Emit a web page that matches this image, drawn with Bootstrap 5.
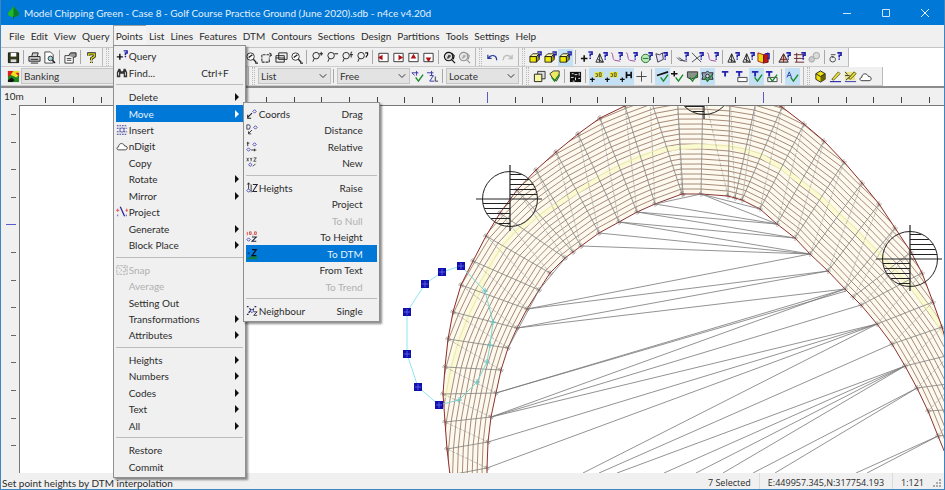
<!DOCTYPE html>
<html lang="en">
<head>
<meta charset="utf-8">
<meta name="viewport" content="width=device-width, initial-scale=1">
<title>Model Chipping Green - n4ce</title>
<link href="https://cdn.jsdelivr.net/npm/bootstrap@5.3.0/dist/css/bootstrap.min.css" rel="stylesheet">
<style>
  :root { --face: #f0f0f0; --edge: #a0a0a0; --accent: #0078d7; }
  body { font: 10px/14px Lato, "Open Sans", sans-serif; color: #2c2c2c; background: var(--face); }
  .app { border: solid #3f86c0; border-width: 0 1px 1px; }
  .title-strip { background: var(--accent); color: #e4f1fc; height: 25px; padding-left: 7px; }
  .title-strip h1 { font-size: 10px; line-height: 14px; font-weight: 400; }
  .title-strip .leaf { margin-right: 5px; }
  .win-btn { width: 39px; height: 25px; border: 0; border-radius: 0; padding: 0; color: #fff; line-height: 0; }
  .menu-strip { height: 22px; padding: 0 5px; align-items: flex-start; }
  .menu-strip .nav-link { color: #2c2c2c; padding: 0 3px; line-height: 22px; height: 20px; }
  .menu-strip .nav-link.show { background: #f4f4f4; box-shadow: inset 1px 1px var(--edge); }
  .pop.dropdown-menu { display: flex; flex-direction: column; border: 1px solid #8f8f8f; border-radius: 0; background: var(--face); padding: 2px; margin: 0; font-size: 10px; box-shadow: 2px 2px 2px #00000070; min-width: 0; color: #2c2c2c; }
  .pop > li { flex: 1 1 0; display: flex; position: relative; }
  .pop > li.rule { flex: 0 0 8px; align-items: center; }
  .pop > li.rule hr { flex: 1; margin: 0; border-color: #999; opacity: .6; }
  .pop .dropdown-item { display: flex; align-items: center; padding: 0; color: inherit; font-size: 10px; line-height: 14px; }
  .pop .dropdown-item.disabled { color: #b0b0b0; }
  .pop .dropdown-item.active { background: var(--accent); color: #e8f3fc; }
  .slot { flex: 0 0 12px; width: 12px; height: 12px; margin-right: 1px; }
  .tail { flex: 0 0 14px; }
  .tail.more::after { content: ""; display: block; margin-left: 6px; width: 0; border: solid transparent; border-width: 4px 0 4px 4px; border-left-color: #111; }
  .active .tail.more::after { border-left-color: #fff; }
  .pop.menu-points { top: 100%; left: 0; width: 133px; height: 433px; }
  .pop.menu-move { top: -3px; left: 100%; width: 137px; height: 220px; }
  .bar-area { background: #fff; border-top: 1px solid #c4c4c4; }
  .bar-row { background: var(--face); width: max-content; height: 19px; padding: 0 5px; border-right: 1px solid #bbb; border-bottom: 1px solid #ccc; }
  .bar-row .btn { width: 15px; height: 17px; padding: 0; border: 0; border-radius: 0; line-height: 0; flex: none; }
  .bar-row .btn.active { background: #c4e0f4; }
  .bar-row .btn:disabled { opacity: .4; }
  .bar-row .btn svg { width: 13px; height: 13px; }
  .split { flex: 0 0 1px; height: 14px; margin: 0 3px 0 2px; background: #a8a8a8; }
  .grip { flex: 0 0 13px; height: 18px; display: flex; justify-content: center; gap: 3px; }
  .grip::before { content: ""; width: 1px; background: #bbb; }
  .grip::after { content: ""; width: 3px; border: dotted #bbb; border-width: 0 1px; }
  .bar-row .form-select { font-size: 10px; line-height: 14px; height: 16px; min-height: 0; width: 73px; padding: 0 14px 0 2px; border: 1px solid #c4c4c4; border-radius: 0; background-color: #e3e3e3; background-size: 8px 8px; background-position: right 3px center; color: #333; flex: none; }
  .bar-row .layer-select { width: 224px; }
  .workspace { display: grid; grid-template-columns: 18px minmax(0, 1fr); grid-template-rows: 17px minmax(0, 1fr); border-top: 2px solid #8c8c8c; min-height: 0; }
  .workspace svg { display: block; width: 100%; height: 100%; }
  .map-pane { background: #fff; border: solid #777; border-width: 1px 0 0 1px; min-height: 0; overflow: hidden; }
  .unit { grid-column: 1 / -1; grid-row: 1; padding-left: 3px; line-height: 16px; }
  .ruler-top { grid-column: 2; grid-row: 1; overflow: hidden; }
  .ruler-left { overflow: hidden; }
  .status { height: 16px; padding: 0 2px 0 1px; line-height: 20px; }
  .status output { border-left: 1px solid #dadada; padding: 0 8px; font-family: "Open Sans", sans-serif; font-size: 9px; }
</style>
</head>
<body>
<svg width="0" height="0" class="position-absolute" aria-hidden="true">
  <defs>
    <g id="mag" fill="none" stroke="#222"><circle cx="5.500" cy="5" r="3.500"/><path d="M3.500 8 2 11.500"/></g>
    <path id="qm" d="M8 2h4v2.500h-2V7M10 8v1.500" fill="none" stroke="#2020a8" stroke-width="1.700"/>
    <path id="tk" d="M5 8l3 4 5-7" fill="none" stroke="#158a28" stroke-width="1.500"/>
    <g id="cube" stroke="#111" stroke-width=".9"><path d="M1 6l3-3h7l-3 3z" fill="#fffbb0"/><path d="M1 6h7v6H1z" fill="#f1e90c"/><path d="M8 6l3-3v6l-3 3z" fill="#a8a000"/></g>
    <g id="tee"><path d="M1 2h7M4.500 2v5" fill="none" stroke="#2424b0" stroke-width="2"/></g>
    <symbol id="save" viewBox="0 0 14 14"><path d="M1.500 2h11v10.500h-11z" fill="#333a18" stroke="#111"/><path d="M4 2h6v4H4z" fill="#fff"/><path d="M4 9h6v3H4z" fill="#ddd"/></symbol>
    <symbol id="print" viewBox="0 0 14 14"><path d="M4 6l1-4h6l-1 4M1 6h12v5H1zM3 9h8M3 13h8" fill="#ccc" stroke="#222"/></symbol>
    <symbol id="preview" viewBox="0 0 14 14"><path d="M2 1h6l3 3v9H2z" fill="#fff" stroke="#444"/><circle cx="8" cy="8" r="2.500" fill="#9ed4dc" stroke="#333"/><path d="M10 10l3 3" stroke="#222" stroke-width="1.500"/></symbol>
    <symbol id="props" viewBox="0 0 14 14"><path d="M1 5h9v8H1zM3 8h5M3 10h5" fill="#fff" stroke="#333"/><path d="M5 5l2-3h6v4l-3 1" fill="#999" stroke="#222"/></symbol>
    <symbol id="help" viewBox="0 0 14 14"><path d="M4 5V3h6v3L7 8v2M7 11.500V13" fill="none" stroke="#222" stroke-width="3.200"/><path d="M4 5V3h6v3L7 8v2M7 11.500V13" fill="none" stroke="#e4dc10" stroke-width="1.400"/></symbol>
    <symbol id="zoom-e" viewBox="0 0 14 14"><circle cx="6" cy="6" r="4" fill="#fff" stroke="#333"/><path d="M4 7l4-3M9 9l3 3M11 13h3" stroke="#222" stroke-width="1.500"/></symbol>
    <symbol id="pan" viewBox="0 0 14 14"><path d="M2 4v8h8V7M3 4h9M10 2l3 2-3 2" fill="none" stroke="#333" stroke-width="1.200" stroke-dasharray="3 1"/></symbol>
    <symbol id="wins" viewBox="0 0 14 14"><path d="M4 2h9v7H4zM1 5h9v7H1zM1 7.500h9" fill="#eee" stroke="#222"/></symbol>
    <symbol id="z-plus" viewBox="0 0 14 14"><use href="#mag"/><path d="M9 3h4M11 1v4" stroke="#111"/></symbol>
    <symbol id="z-minus" viewBox="0 0 14 14"><use href="#mag"/><path d="M9 3h4" stroke="#111"/></symbol>
    <symbol id="z-in" viewBox="0 0 14 14"><use href="#mag"/><path d="M12 1c-2 0-1 2-1 6M9.500 4H13" fill="none" stroke="#111"/></symbol>
    <symbol id="z-last" viewBox="0 0 14 14"><use href="#mag"/><path d="M10 2h2.500v2L11 6v1" fill="none" stroke="#111" stroke-width="1.200"/></symbol>
    <symbol id="a-left" viewBox="0 0 14 14"><path d="M2 2.500h10v9H2z" fill="#fff" stroke="#333"/><path d="M1 7l5-3v6z" fill="#b01010"/></symbol>
    <symbol id="a-right" viewBox="0 0 14 14"><path d="M2 2.500h10v9H2z" fill="#fff" stroke="#333"/><path d="M12 7L7 4v6z" fill="#b01010"/></symbol>
    <symbol id="a-up" viewBox="0 0 14 14"><path d="M2 2.500h10v9H2z" fill="#fff" stroke="#333"/><path d="M7 3l3 5H4z" fill="#b01010"/></symbol>
    <symbol id="a-down" viewBox="0 0 14 14"><path d="M2 2.500h10v9H2z" fill="#fff" stroke="#333"/><path d="M7 12l3-5H4z" fill="#b01010"/></symbol>
    <symbol id="refresh" viewBox="0 0 14 14"><circle cx="6" cy="6" r="4.500" fill="#ddd" stroke="#111" stroke-width="1.200"/><path d="M4 8l2-4 3 1-3 3z" fill="#444"/><path d="M9 9l4 4M9 2l3 3-1 4" fill="none" stroke="#111" stroke-width="1.300"/></symbol>
    <symbol id="undo" viewBox="0 0 14 14"><path d="M2 4v4h4M2.500 8c2-4 9-5 9 2" fill="none" stroke="#2a3a9a" stroke-width="1.300"/></symbol>
    <symbol id="redo" viewBox="0 0 14 14"><path d="M12 4v4H8M11.500 8c-2-4-9-5-9 2" fill="none" stroke="#777" stroke-width="1.500"/></symbol>
    <symbol id="cube-q" viewBox="0 0 14 14"><use href="#cube"/><path d="M9 1h4v3h-2v3" fill="none" stroke="#2020a8" stroke-width="1.600"/></symbol>
    <symbol id="plus-q" viewBox="0 0 14 14"><path d="M1 8h7M4.500 4.500v7" stroke="#111" stroke-width="1.700"/><use href="#qm" x="1" y="-1"/></symbol>
    <symbol id="tri-q" viewBox="0 0 14 14"><path d="M1 12l4-9 4 9zM5 3v9M3 9l6 3" fill="none" stroke="#222"/><use href="#qm" x="1"/></symbol>
    <symbol id="link-q" viewBox="0 0 14 14"><path d="M1 2c3 0 1 6 4 8l6 1" fill="none" stroke="#9a4a9a"/><use href="#qm" x="1"/></symbol>
    <symbol id="circ-q" viewBox="0 0 14 14"><circle cx="6" cy="8" r="4.500" fill="#b8ecb0" stroke="#246a3a"/><path d="M3 8h6" stroke="#246a3a"/><use href="#qm" x="1"/></symbol>
    <symbol id="poly-q" viewBox="0 0 14 14"><path d="M1 3l4 1 3-2 1 7-6 3z" fill="#e8e0f4" stroke="#334"/><use href="#qm" x="1"/></symbol>
    <symbol id="line-q" viewBox="0 0 14 14"><path d="M1 7l3 3 8 1M3 7l6 4" fill="none" stroke="#445"/><use href="#qm" x="1"/></symbol>
    <symbol id="cross-q" viewBox="0 0 14 14"><path d="M1 2l10 10M1 12l9-7" fill="none" stroke="#445"/><use href="#qm" x="1"/></symbol>
    <symbol id="book" viewBox="0 0 14 14"><path d="M1 2l6 2v9l-6-2z" fill="#e8d810" stroke="#b02020"/><path d="M7 4l5-2v10l-5 1z" fill="#c01818" stroke="#701010"/><path d="M9 3h4v5h-2" stroke="#2020a8" stroke-width="1.500" fill="none"/></symbol>
    <symbol id="tri-r" viewBox="0 0 14 14"><path d="M1 12l5-9 5 9z" fill="#e2b8b0" stroke="#222"/><path d="M3 9h6M6 3v9" stroke="#722"/><use href="#qm" x="1"/></symbol>
    <symbol id="hash-q" viewBox="0 0 14 14"><path d="M1 4h11M1 8h11M2 12h10M4 2v10" stroke="#622" fill="none"/><use href="#qm" x="1"/></symbol>
    <symbol id="chain" viewBox="0 0 14 14"><circle cx="4" cy="9" r="3" fill="#999" stroke="#333"/><circle cx="9" cy="5" r="3.500" fill="#bbb" stroke="#333"/></symbol>
    <symbol id="loop-q" viewBox="0 0 14 14"><path d="M2 4h5M5 6a3 3 0 1 0 2 3c0-2-2-3-4-2" fill="none" stroke="#444"/><use href="#qm" x="1"/></symbol>
    <symbol id="layers" viewBox="0 0 14 14"><path d="M1 1h12v12H1z" fill="#282"/><path d="M1 1h6l-2 4-4 2z" fill="#e02020"/><path d="M7 1h6v4l-3 3-6-3z" fill="#f0e020"/><path d="M9 3l4 4V3z" fill="#e02020"/><path d="M1 11l4-3 3 3-2 2H1z" fill="#111"/></symbol>
    <symbol id="pt-tick" viewBox="0 0 14 14"><path d="M1 3h7M6 1v5M1 3l3 3" stroke="#3535a8" fill="none"/><use href="#tk"/></symbol>
    <symbol id="pt-z" viewBox="0 0 14 14"><path d="M1 3h7M6 1v5M4 6h4l-4 6h5" stroke="#3535a8" fill="none"/><path d="M10 7v5h3" stroke="#333" fill="none"/></symbol>
    <symbol id="sheets" viewBox="0 0 14 14"><path d="M5 1.500h8v8H5z" fill="#ddd"  stroke="#333"/><path d="M1.500 4.500h8v8h-8z" fill="#f7f6a0" stroke="#222"/></symbol>
    <symbol id="cube-t" viewBox="0 0 14 14"><path d="M2 4l4-3h6v6l-3 5-4-3z" fill="#eeea60" stroke="#333"/><use href="#tk" x="-1"/></symbol>
    <symbol id="binary" viewBox="0 0 14 14"><path d="M1 2h12v11H1z" fill="#111"/><path d="M3 4h2M6 5h3M11 3v3M2 8h3M7 8v3M10 9h2M4 12h2" stroke="#eee"/></symbol>
    <symbol id="lab" viewBox="0 0 14 14"><path d="M0 10h5M2.500 8v5" stroke="#111" stroke-width="1.300"/><path d="M5 2h9v6H5z" fill="#ece838"/><path d="M6 4h2v3H6M10 3h2v4h-2z" fill="none" stroke="#553"/></symbol>
    <symbol id="lab-h" viewBox="0 0 14 14"><path d="M0 10h5M2.500 8v5" stroke="#111" stroke-width="1.300"/><path d="M7 2v7M12 2v7M7 5.500h5" stroke="#111" stroke-width="1.800"/></symbol>
    <symbol id="plus" viewBox="0 0 14 14"><path d="M1.500 7h11M7 1.500v11" stroke="#444"/></symbol>
    <symbol id="line-t" viewBox="0 0 14 14"><path d="M1 6l12-4" stroke="#111" stroke-width="1.800"/><use href="#tk"/></symbol>
    <symbol id="plus-t" viewBox="0 0 14 14"><path d="M0 4h7M3.500 1v6" stroke="#111" stroke-width="1.600"/><use href="#tk"/></symbol>
    <symbol id="shield" viewBox="0 0 14 14"><path d="M1.500 2h11v6l-5 1-2 1-4-2z" fill="#8a938a" stroke="#333"/><use href="#tk" x="-1"/></symbol>
    <symbol id="gear-t" viewBox="0 0 14 14"><path d="M7 1l2 2 4 0-1 4 1 3-4 0-2 2-2-2-4 0 1-3-1-4 4 0z" fill="#9ab" stroke="#222"/><circle cx="7" cy="6.500" r="2" fill="#dde" stroke="#222"/><use href="#tk" x="-1"/></symbol>
    <symbol id="t1" viewBox="0 0 14 14"><use href="#tee" x="1"/></symbol>
    <symbol id="t-box" viewBox="0 0 14 14"><use href="#tee"/><path d="M3 8h10v4.500H3z" fill="#fff" stroke="#444"/></symbol>
    <symbol id="t-tick" viewBox="0 0 14 14"><use href="#tee" x="1"/><use href="#tk"/></symbol>
    <symbol id="t-box-t" viewBox="0 0 14 14"><use href="#tee"/><path d="M3 8h10v4.500H3z" fill="#fff" stroke="#444"/><use href="#tk"/></symbol>
    <symbol id="a-tick" viewBox="0 0 14 14"><path d="M1 8l2.500-6L6 8M2 6h3" fill="none" stroke="#2840a8"/><use href="#tk"/></symbol>
    <symbol id="cube3" viewBox="0 0 14 14"><path d="M2 4l5-3 5 3v6l-5 3-5-3z" fill="#eee010" stroke="#222"/><path d="M7 7v6l5-3V4z" fill="#6c6600"/><path d="M2 4l5 3 5-3" fill="none" stroke="#222"/></symbol>
    <symbol id="pencil" viewBox="0 0 14 14"><path d="M3 10l7-8 2 2-7 7z" fill="#ece030" stroke="#663"/><path d="M1 12.500h12" stroke="#33a" stroke-width="1.300"/></symbol>
    <symbol id="edit" viewBox="0 0 14 14"><path d="M1 2h11v9H1z" fill="#e8e48a"/><path d="M1 2l3 3M1 6h5M2 11l9-8" stroke="#333"/><path d="M5 9l6-7 2 2-6 6z" fill="#ece030" stroke="#552"/><path d="M1 12.500h12" stroke="#33a"/></symbol>
    <symbol id="cloud" viewBox="0 0 14 14"><path d="M3 11.500c-3 0-2-4 0-3.500 0-5 6-5 7-1 4-.500 4 4.500 1 4.500z" fill="#fff" stroke="#333"/></symbol>
    <symbol id="find" viewBox="0 0 14 14"><path d="M1 12V6l2-4h2l1 3h2l1-3h2l2 4v6H9V8H5v4z" fill="#333"/><path d="M3 6v4M11 6v4" stroke="#eee"/></symbol>
    <symbol id="insert" viewBox="0 0 14 14"><path d="M1 2h12M1 5h4M9 5h4M1 9h4M9 9h4M1 12h12" stroke="#4444a0" stroke-width="1.300" stroke-dasharray="2 1"/><circle cx="7" cy="7" r="2.500" fill="none" stroke="#4444a0"/></symbol>
    <symbol id="project" viewBox="0 0 14 14"><path d="M5 1l5 11" stroke="#2828a0" stroke-width="1.500"/><path d="M0 5h4M2 3v4M11 5h3M12.500 3v4" stroke="#e05050"/><path d="M2 10v2M12 10v2" stroke="#4444c0"/></symbol>
    <symbol id="snap" viewBox="0 0 14 14"><path d="M1 2h12v10H1zM3 4l4 3-3 3M8 4h3v5H8" fill="none" stroke="#aaa" stroke-dasharray="3 1"/></symbol>
    <g id="dia"><path d="M2 0l2 2-2 2-2-2z" fill="none" stroke="#3a3ab8"/></g>
    <symbol id="drag" viewBox="0 0 14 14"><use href="#dia" x="8" y="2"/><path d="M2 11l5-5M2 8v4h4" stroke="#222" stroke-width="1.300" fill="none"/></symbol>
    <symbol id="dist" viewBox="0 0 14 14"><path d="M1 1h3l1 2-1 3H1z" fill="none" stroke="#335"/><use href="#dia" x="9" y="2"/><path d="M3 11l4-4M3 8.500v3h3" stroke="#222" fill="none"/></symbol>
    <symbol id="rel" viewBox="0 0 14 14"><path d="M2 1v5M1 2.500h3M6 10.500h6M10 9v3" stroke="#222"/><use href="#dia" x="8" y="2"/><use href="#dia" x="1" y="8"/></symbol>
    <symbol id="xyz" viewBox="0 0 14 14"><path d="M1 1l2 4M3 1L1 5M5 1l1 2 1-2M6 3v2M9 1h3L9 5h3" fill="none" stroke="#444"/><use href="#dia" x="3" y="7"/><path d="M8 11l3-3" stroke="#222"/></symbol>
    <symbol id="raise" viewBox="0 0 14 14"><path d="M3 1v7M1.500 3L3 1l1.500 2M6 3v9" stroke="#222" fill="none"/><use href="#dia" x="1" y="8"/><path d="M8 3h5l-5 8h5" fill="none" stroke="#223" stroke-width="1.200"/></symbol>
    <symbol id="toh" viewBox="0 0 14 14"><path d="M1.500 1v4M4 1h2v3H4zM8 4v1M10 1h2v3h-2z" fill="none" stroke="#d04040"/><use href="#dia" x="1" y="8"/><path d="M7 7h5l-5 5h5" fill="none" stroke="#223" stroke-width="1.200"/></symbol>
    <symbol id="todtm" viewBox="0 0 14 14"><path d="M1 12l5-2 7-1v4H1z" fill="#108048"/><path d="M2 6h2" stroke="#012"/><path d="M7 2h5l-5 7h5" fill="none" stroke="#012" stroke-width="1.500"/></symbol>
    <symbol id="neigh" viewBox="0 0 14 14"><path d="M1 2h2M10 2h2M1 11h2M4 4l2 2M9 4L8 6M3 9l2-2" stroke="#224" stroke-width="1.400"/><use href="#dia" x="5" y="5"/><path d="M9 8h4l-4 4h4" fill="none" stroke="#223"/></symbol>
  </defs>
</svg>

<div class="app d-flex flex-column vh-100">
  <header class="title-strip d-flex align-items-center">
    <svg class="leaf" width="11" height="13" viewBox="0 0 11 13" aria-hidden="true"><path d="M5.500 0C8 4 11 5 11 8c0 2-3 3-5.500 3S0 10 0 8c0-3 4-4 5.500-8z" fill="#22b822"/><path d="M5.500 0C8 4 11 5 11 8c0 2-3 3-5.500 3z" fill="#0b7a2c"/><path d="M5 10h1v3H5z" fill="#064"/></svg>
    <h1 class="mb-0 flex-grow-1">Model Chipping Green - Case 8 - Golf Course Practice Ground (June 2020).sdb - n4ce v4.20d</h1>
    <button class="btn win-btn" aria-label="Minimise"><svg width="10" height="10"><path d="M1 5.500h8" stroke="#cfe6fa"/></svg></button>
    <button class="btn win-btn" aria-label="Maximise"><svg width="10" height="10"><path d="M1.500 1.500h7v7h-7z" fill="none" stroke="#cfe6fa"/></svg></button>
    <button class="btn win-btn" aria-label="Close"><svg width="10" height="10"><path d="M1 1l8 8M9 1L1 9" stroke="#e4f1fc"/></svg></button>
  </header>

  <nav aria-label="Main menu">
    <ul class="nav menu-strip flex-nowrap">
      <li class="nav-item"><a class="nav-link" href="#">File</a></li>
      <li class="nav-item"><a class="nav-link" href="#">Edit</a></li>
      <li class="nav-item"><a class="nav-link" href="#">View</a></li>
      <li class="nav-item"><a class="nav-link" href="#">Query</a></li>
      <li class="nav-item dropdown">
        <a class="nav-link show" href="#" aria-expanded="true">Points</a>
        <ul class="dropdown-menu show pop menu-points">
          <li><button class="dropdown-item"><svg class="slot"><use href="#plus-q"/></svg>Query</button></li>
          <li><button class="dropdown-item"><svg class="slot"><use href="#find"/></svg>Find...<span class="ms-auto">Ctrl+F</span><span class="tail"></span></button></li>
          <li class="rule"><hr></li>
          <li><button class="dropdown-item"><span class="slot"></span>Delete<span class="tail more ms-auto"></span></button></li>
          <li>
            <button class="dropdown-item active"><span class="slot"></span>Move<span class="tail more ms-auto"></span></button>
            <ul class="dropdown-menu show pop menu-move">
              <li><button class="dropdown-item"><svg class="slot"><use href="#drag"/></svg>Coords<span class="ms-auto">Drag</span><span class="tail"></span></button></li>
              <li><button class="dropdown-item"><svg class="slot"><use href="#dist"/></svg><span class="ms-auto">Distance</span><span class="tail"></span></button></li>
              <li><button class="dropdown-item"><svg class="slot"><use href="#rel"/></svg><span class="ms-auto">Relative</span><span class="tail"></span></button></li>
              <li><button class="dropdown-item"><svg class="slot"><use href="#xyz"/></svg><span class="ms-auto">New</span><span class="tail"></span></button></li>
              <li class="rule"><hr></li>
              <li><button class="dropdown-item"><svg class="slot"><use href="#raise"/></svg>Heights<span class="ms-auto">Raise</span><span class="tail"></span></button></li>
              <li><button class="dropdown-item"><span class="ms-auto">Project</span><span class="tail"></span></button></li>
              <li><button class="dropdown-item disabled"><span class="ms-auto">To Null</span><span class="tail"></span></button></li>
              <li><button class="dropdown-item"><svg class="slot"><use href="#toh"/></svg><span class="ms-auto">To Height</span><span class="tail"></span></button></li>
              <li><button class="dropdown-item active"><svg class="slot"><use href="#todtm"/></svg><span class="ms-auto">To DTM</span><span class="tail"></span></button></li>
              <li><button class="dropdown-item"><span class="ms-auto">From Text</span><span class="tail"></span></button></li>
              <li><button class="dropdown-item disabled"><span class="ms-auto">To Trend</span><span class="tail"></span></button></li>
              <li class="rule"><hr></li>
              <li><button class="dropdown-item"><svg class="slot"><use href="#neigh"/></svg>Neighbour<span class="ms-auto">Single</span><span class="tail"></span></button></li>
            </ul>
          </li>
          <li><button class="dropdown-item"><svg class="slot"><use href="#insert"/></svg>Insert</button></li>
          <li><button class="dropdown-item"><svg class="slot"><use href="#cloud"/></svg>nDigit</button></li>
          <li><button class="dropdown-item"><span class="slot"></span>Copy</button></li>
          <li><button class="dropdown-item"><span class="slot"></span>Rotate<span class="tail more ms-auto"></span></button></li>
          <li><button class="dropdown-item"><span class="slot"></span>Mirror<span class="tail more ms-auto"></span></button></li>
          <li><button class="dropdown-item"><svg class="slot"><use href="#project"/></svg>Project</button></li>
          <li><button class="dropdown-item"><span class="slot"></span>Generate<span class="tail more ms-auto"></span></button></li>
          <li><button class="dropdown-item"><span class="slot"></span>Block Place<span class="tail more ms-auto"></span></button></li>
          <li class="rule"><hr></li>
          <li><button class="dropdown-item disabled"><svg class="slot"><use href="#snap"/></svg>Snap</button></li>
          <li><button class="dropdown-item disabled"><span class="slot"></span>Average</button></li>
          <li><button class="dropdown-item"><span class="slot"></span>Setting Out</button></li>
          <li><button class="dropdown-item"><span class="slot"></span>Transformations<span class="tail more ms-auto"></span></button></li>
          <li><button class="dropdown-item"><span class="slot"></span>Attributes<span class="tail more ms-auto"></span></button></li>
          <li class="rule"><hr></li>
          <li><button class="dropdown-item"><span class="slot"></span>Heights<span class="tail more ms-auto"></span></button></li>
          <li><button class="dropdown-item"><span class="slot"></span>Numbers<span class="tail more ms-auto"></span></button></li>
          <li><button class="dropdown-item"><span class="slot"></span>Codes<span class="tail more ms-auto"></span></button></li>
          <li><button class="dropdown-item"><span class="slot"></span>Text<span class="tail more ms-auto"></span></button></li>
          <li><button class="dropdown-item"><span class="slot"></span>All<span class="tail more ms-auto"></span></button></li>
          <li class="rule"><hr></li>
          <li><button class="dropdown-item"><span class="slot"></span>Restore</button></li>
          <li><button class="dropdown-item"><span class="slot"></span>Commit</button></li>
        </ul>
      </li>
      <li class="nav-item"><a class="nav-link" href="#">List</a></li>
      <li class="nav-item"><a class="nav-link" href="#">Lines</a></li>
      <li class="nav-item"><a class="nav-link" href="#">Features</a></li>
      <li class="nav-item"><a class="nav-link" href="#">DTM</a></li>
      <li class="nav-item"><a class="nav-link" href="#">Contours</a></li>
      <li class="nav-item"><a class="nav-link" href="#">Sections</a></li>
      <li class="nav-item"><a class="nav-link" href="#">Design</a></li>
      <li class="nav-item"><a class="nav-link" href="#">Partitions</a></li>
      <li class="nav-item"><a class="nav-link" href="#">Tools</a></li>
      <li class="nav-item"><a class="nav-link" href="#">Settings</a></li>
      <li class="nav-item"><a class="nav-link" href="#">Help</a></li>
    </ul>
  </nav>

  <div class="bar-area">
    <div class="bar-row d-flex align-items-center" role="toolbar" aria-label="Standard">
      <button class="btn" aria-label="Save"><svg><use href="#save"/></svg></button><i class="split"></i>
      <button class="btn" aria-label="Print"><svg><use href="#print"/></svg></button>
      <button class="btn" aria-label="Print preview"><svg><use href="#preview"/></svg></button><i class="split"></i>
      <button class="btn" aria-label="Properties"><svg><use href="#props"/></svg></button><i class="split"></i>
      <button class="btn" aria-label="Help"><svg><use href="#help"/></svg></button><i class="grip"></i>
      <button class="btn" aria-label="Point"><svg><use href="#plus"/></svg></button>
      <button class="btn" aria-label="Line"><svg><use href="#line-q"/></svg></button>
      <button class="btn" aria-label="Feature"><svg><use href="#poly-q"/></svg></button>
      <button class="btn" aria-label="Triangle"><svg><use href="#tri-q"/></svg></button><i class="split"></i>
      <button class="btn" aria-label="Book"><svg><use href="#book"/></svg></button>
      <button class="btn" aria-label="Section"><svg><use href="#hash-q"/></svg></button><i class="split"></i>
      <button class="btn" aria-label="Window"><svg><use href="#wins"/></svg></button>
      <button class="btn" aria-label="Find"><svg><use href="#find"/></svg></button>
      <button class="btn" aria-label="Zoom extents"><svg><use href="#zoom-e"/></svg></button>
      <button class="btn" aria-label="Pan"><svg><use href="#pan"/></svg></button>
      <button class="btn" aria-label="Windows"><svg><use href="#wins"/></svg></button>
      <button class="btn" aria-label="Zoom scale"><svg><use href="#zoom-e"/></svg></button><i class="split"></i>
      <button class="btn" aria-label="Zoom in"><svg><use href="#z-plus"/></svg></button>
      <button class="btn" aria-label="Zoom out"><svg><use href="#z-minus"/></svg></button>
      <button class="btn" aria-label="Zoom factor"><svg><use href="#z-in"/></svg></button>
      <button class="btn" aria-label="Zoom last"><svg><use href="#z-last"/></svg></button><i class="split"></i>
      <button class="btn" aria-label="Pan left"><svg><use href="#a-left"/></svg></button>
      <button class="btn" aria-label="Pan right"><svg><use href="#a-right"/></svg></button>
      <button class="btn" aria-label="Pan up"><svg><use href="#a-up"/></svg></button>
      <button class="btn" aria-label="Pan down"><svg><use href="#a-down"/></svg></button><i class="split"></i>
      <button class="btn" aria-label="Redraw"><svg><use href="#refresh"/></svg></button>
      <button class="btn" aria-label="Redraw all" disabled><svg><use href="#refresh"/></svg></button><i class="grip"></i>
      <button class="btn" aria-label="Undo"><svg><use href="#undo"/></svg></button>
      <button class="btn" aria-label="Redo" disabled><svg><use href="#redo"/></svg></button><i class="grip"></i>
      <button class="btn" aria-label="Query model"><svg><use href="#cube-q"/></svg></button>
      <button class="btn" aria-label="Query layer"><svg><use href="#cube-q"/></svg></button>
      <button class="btn active" aria-label="Query current"><svg><use href="#cube-q"/></svg></button><i class="split"></i>
      <button class="btn" aria-label="Query point"><svg><use href="#plus-q"/></svg></button>
      <button class="btn" aria-label="Query height"><svg><use href="#tri-q"/></svg></button>
      <button class="btn" aria-label="Query link"><svg><use href="#link-q"/></svg></button>
      <button class="btn" aria-label="Query string"><svg><use href="#link-q"/></svg></button>
      <button class="btn" aria-label="Query circle"><svg><use href="#circ-q"/></svg></button>
      <button class="btn" aria-label="Query area"><svg><use href="#poly-q"/></svg></button><i class="split"></i>
      <button class="btn" aria-label="Query distance"><svg><use href="#line-q"/></svg></button>
      <button class="btn" aria-label="Query intersection"><svg><use href="#cross-q"/></svg></button>
      <button class="btn" aria-label="Query curve"><svg><use href="#link-q"/></svg></button><i class="split"></i>
      <button class="btn" aria-label="Query triangle"><svg><use href="#tri-q"/></svg></button>
      <button class="btn" aria-label="Query slope"><svg><use href="#tri-q"/></svg></button>
      <button class="btn" aria-label="Query volume"><svg><use href="#book"/></svg></button><i class="split"></i>
      <button class="btn" aria-label="Query surface"><svg><use href="#tri-r"/></svg></button>
      <button class="btn" aria-label="Query section"><svg><use href="#hash-q"/></svg></button>
      <button class="btn" aria-label="Query group" disabled><svg><use href="#chain"/></svg></button><i class="split"></i>
      <button class="btn" aria-label="Query alignment"><svg><use href="#loop-q"/></svg></button>
    </div>
    <div class="bar-row d-flex align-items-center" role="toolbar" aria-label="Display">
      <button class="btn" aria-label="Layers"><svg><use href="#layers"/></svg></button>
      <select class="form-select layer-select" aria-label="Layer"><option>Banking</option></select><i class="grip"></i>
      <select class="form-select" aria-label="Selection type"><option>List</option></select><i class="split"></i>
      <select class="form-select" aria-label="Snap mode"><option>Free</option></select>
      <button class="btn" aria-label="Accept point"><svg><use href="#pt-tick"/></svg></button>
      <button class="btn" aria-label="Point height"><svg><use href="#pt-z"/></svg></button><i class="split"></i>
      <select class="form-select" aria-label="Action"><option>Locate</option></select><i class="grip"></i>
      <button class="btn" aria-label="Sheets"><svg><use href="#sheets"/></svg></button>
      <button class="btn" aria-label="Check model"><svg><use href="#cube-t"/></svg></button><i class="split"></i>
      <button class="btn" aria-label="Data"><svg><use href="#binary"/></svg></button><i class="split"></i>
      <button class="btn active" aria-label="Show numbers"><svg><use href="#lab"/></svg></button>
      <button class="btn active" aria-label="Show codes"><svg><use href="#lab"/></svg></button>
      <button class="btn active" aria-label="Show heights"><svg><use href="#lab-h"/></svg></button>
      <button class="btn" aria-label="Show points"><svg><use href="#plus"/></svg></button><i class="split"></i>
      <button class="btn active" aria-label="Show lines"><svg><use href="#line-t"/></svg></button>
      <button class="btn" aria-label="Show stations"><svg><use href="#plus-t"/></svg></button>
      <button class="btn" aria-label="Show shading"><svg><use href="#shield"/></svg></button>
      <button class="btn active me-1" aria-label="Show symbols"><svg><use href="#gear-t"/></svg></button>
      <button class="btn" aria-label="Text"><svg><use href="#t1"/></svg></button>
      <button class="btn" aria-label="Text box"><svg><use href="#t-box"/></svg></button>
      <button class="btn active" aria-label="Show text"><svg><use href="#t-tick"/></svg></button>
      <button class="btn" aria-label="Show text box"><svg><use href="#t-box-t"/></svg></button><i class="split"></i>
      <button class="btn active" aria-label="Show angles"><svg><use href="#a-tick"/></svg></button><i class="grip"></i>
      <button class="btn" aria-label="3D view"><svg><use href="#cube3"/></svg></button>
      <button class="btn" aria-label="Draw"><svg><use href="#pencil"/></svg></button>
      <button class="btn" aria-label="Edit"><svg><use href="#edit"/></svg></button>
      <button class="btn me-1" aria-label="Cloud"><svg><use href="#cloud"/></svg></button>
    </div>
  </div>

  <main class="workspace flex-grow-1">
    <span class="unit">10m</span>
    <svg class="ruler-top" id="rulerTop" aria-hidden="true"></svg>
    <svg class="ruler-left" id="rulerLeft" aria-hidden="true"></svg>
    <div class="map-pane">
      <svg id="map" viewBox="20 106 924 367" preserveAspectRatio="xMinYMin slice" role="img" aria-label="Contoured survey model"></svg>
    </div>
  </main>

  <footer class="status d-flex">
    <span class="flex-grow-1">Set point heights by DTM interpolation</span>
    <output class="border-0">7 Selected</output>
    <output>E:449957.345,N:317754.193</output>
    <output>1:121</output>
    <svg class="align-self-end" width="10" height="10" aria-hidden="true"><path d="M7 1h2M7 4h2M4 4h2M7 7h2M4 7h2M1 7h2" stroke="#aaa" stroke-width="2"/></svg>
  </footer>
</div>

<script src="https://cdn.jsdelivr.net/npm/bootstrap@5.3.0/dist/js/bootstrap.bundle.min.js"></script>
<script>
  const NS = 'http://www.w3.org/2000/svg';
  const rulerTop = document.getElementById('rulerTop');
  const rulerLeft = document.getElementById('rulerLeft');
  const map = document.getElementById('map');
  function add(parent, tag, attrs) {
    const el = document.createElementNS(NS, tag);
    for (const k in attrs) el.setAttribute(k, attrs[k]);
    parent.appendChild(el);
    return el;
  }
  const path = pts => 'M' + pts.map(p => p.join(' ')).join('L');

  // Rulers: one tick per metre, a long blue one every ten.
  const STEP = 27.6;
  for (let i = 0; i < 80; i++) {
    const topMajor = i % 10 === 6, leftMajor = i % 10 === 4;
    const x = Math.round(302.4 + (i - 10) * STEP) + .5;
    add(rulerTop, 'path', { d: `M${x} ${topMajor ? 4 : 9}V15`, stroke: topMajor ? '#5a5ac8' : '#444' });
    const y = Math.round(9 + i * STEP) + .5;
    add(rulerLeft, 'path', { d: `M${leftMajor ? 5 : 10} ${y}H15`, stroke: leftMajor ? '#5a5ac8' : '#666' });
  }

  // Cross-sections of the bank: [outer x, outer y, inner x, inner y].
  const ribs = [
    [457,490,487,494],[450,475,487,468],[447,449,488,442],[445,422,491,417],[443,394,496,393],[445,367,501,370],[448,339,508,348],
    [453,312,517,328],[461,285,527,309],[473,261,539,290],[486,236,550,273],[500,213,565,258],[517,190,573,252],
    [536,170,581,246],[556,152,599,233],[578,134,619,222],[600,118,637,212],[625,106,655,204],[650,97,682,194],
    [677,92,683,194],[703,90,701,194],[730,91,728,196],[757,97,735,198],[782,107,742,200],[804,124,760,209],[824,141,777,224],
    [844,162,795,238],[862,183,810,254],[879,204,828,271],[895,228,845,289],[911,252,853,297],[922,273,861,305],
    [933,302,877,324],[942,327,892,344],[950,355,905,366],[955,383,917,388],[960,409,928,411],[966,433,938,436],[972,462,950,465]
  ];
  const outer = ribs.map(r => [r[0], r[1]]), inner = ribs.map(r => [r[2], r[3]]);
  const band = path(outer.concat(inner.slice().reverse())) + 'Z';
  add(add(map, 'clipPath', { id: 'bandClip' }), 'path', { d: band });
  add(map, 'path', { d: band, fill: '#fdf9ee' });
  const g = add(map, 'g', { 'clip-path': 'url(#bandClip)', fill: 'none' });
  const crest = [[447,398],[450,375],[458,345],[469,315],[483,280],[495,256],[513,233],[537,217],[580,190],[610,171],[637,158],[667,149],[700,146],[733,147],[760,155],[778,166],[812,190],[845,220],[878,253],[912,288],[932,313],[946,336]];

  for (let k = 1; k < 24; k++) {
    const pts = ribs.map(([ox, oy, ix, iy]) => {
      const len = Math.hypot(ox - ix, oy - iy), f = 5 * k / len;
      return [(ix + (ox - ix) * f).toFixed(1), (iy + (oy - iy) * f).toFixed(1)];
    });
    add(g, 'path', { d: path(pts), stroke: '#84604a', 'stroke-width': .8, opacity: .9 });
  }
  add(g, 'path', { d: path(crest), stroke: '#fafac8', 'stroke-width': 5, opacity: .8 });
  ribs.forEach((r, i) => {
    add(map, 'path', { d: path([outer[i], inner[i]]), stroke: '#808080', 'stroke-width': .8 });
    const n = r[0] < 700 ? i - 1 : i + 1;
    if (inner[n]) add(map, 'path', { d: path([outer[i], inner[n]]), stroke: '#999', 'stroke-width': .6, 'stroke-dasharray': '4 1' });
    for (const [x, y] of [outer[i], inner[i]])
      add(map, 'path', { d: `M${x - 3} ${y}h6M${x} ${y - 3}v6M${x - 2} ${y - 2}l4 4`, stroke: '#887f7a', 'stroke-width': .6 });
  });
  add(map, 'path', { d: path(outer), stroke: '#8a2c2c', fill: 'none' });
  add(map, 'path', { d: path(inner), stroke: '#8a3434', fill: 'none' });

  // Triangle edges that cross the hollow.
  const edges = [
    [655,204,777,224],[637,212,777,224],[637,212,795,238],[619,222,795,238],[619,222,810,254],[599,233,810,254],[581,246,810,254],
    [701,194,777,224],[701,194,760,209],[655,204,701,194],[527,309,810,254],[527,309,828,271],[517,328,828,271],[517,328,845,289],[496,393,845,289],
    [496,393,846,291],[491,417,845,289],[491,417,861,305],[491,417,877,324],[488,442,877,324],[487,468,877,324],
    [583,473,877,324],[599,473,892,344],[617,473,905,366],[664,473,905,366],[696,473,905,366],[723,473,905,366],
    [753,473,917,388],[775,473,917,388],[856,473,938,436],[867,473,938,436],[539,290,567,256],[508,348,539,290]
  ];
  for (const [a, b, c, d] of edges)
    add(map, 'path', { d: `M${a} ${b}L${c} ${d}`, stroke: '#777', 'stroke-width': .8 });

  // Station targets with two hatched quadrants.
  for (const [cx, cy] of [[510,199],[910,259],[704,87]]) {
    const s = add(map, 'g', { stroke: '#222', fill: 'none' });
    add(s, 'circle', { cx, cy, r: 27.5 });
    add(s, 'path', { d: `M${cx - 34} ${cy}h66M${cx} ${cy - 34}v66`, 'stroke-width': 1.2 });
    for (let h = 5; h < 27; h += 5) {
      const w = Math.sqrt(27.5 * 27.5 - h * h);
      add(s, 'path', { d: `M${cx} ${cy - h + .5}h${w}M${cx} ${cy + h - .5}h${-w}` });
    }
  }

  // Selected string.
  const sel = [[461,266],[442,272],[425,284],[407,312],[407,354],[418,387],[439,405]];
  const rest = [[439,405],[459,400],[477,382],[487,362],[490,345],[493,322],[485,291],[461,266]];
  add(map, 'path', { d: path(sel), stroke: '#8fe6f2', fill: 'none' });
  add(map, 'path', { d: path(rest), stroke: '#7fd6d4', fill: 'none' });
  for (const [x, y] of rest.slice(1, -1))
    add(map, 'path', { d: `M${x - 3} ${y}h6M${x} ${y - 3}v6`, stroke: '#6cc4c4' });
  for (const [x, y] of sel) {
    add(map, 'rect', { x: x - 4, y: y - 4, width: 8, height: 8, fill: '#1010b0' });
    add(map, 'path', { d: `M${x - 3} ${y}h6M${x} ${y - 3}v6`, stroke: '#6a6ae8', 'stroke-width': .8 });
  }
</script>
</body>
</html>
